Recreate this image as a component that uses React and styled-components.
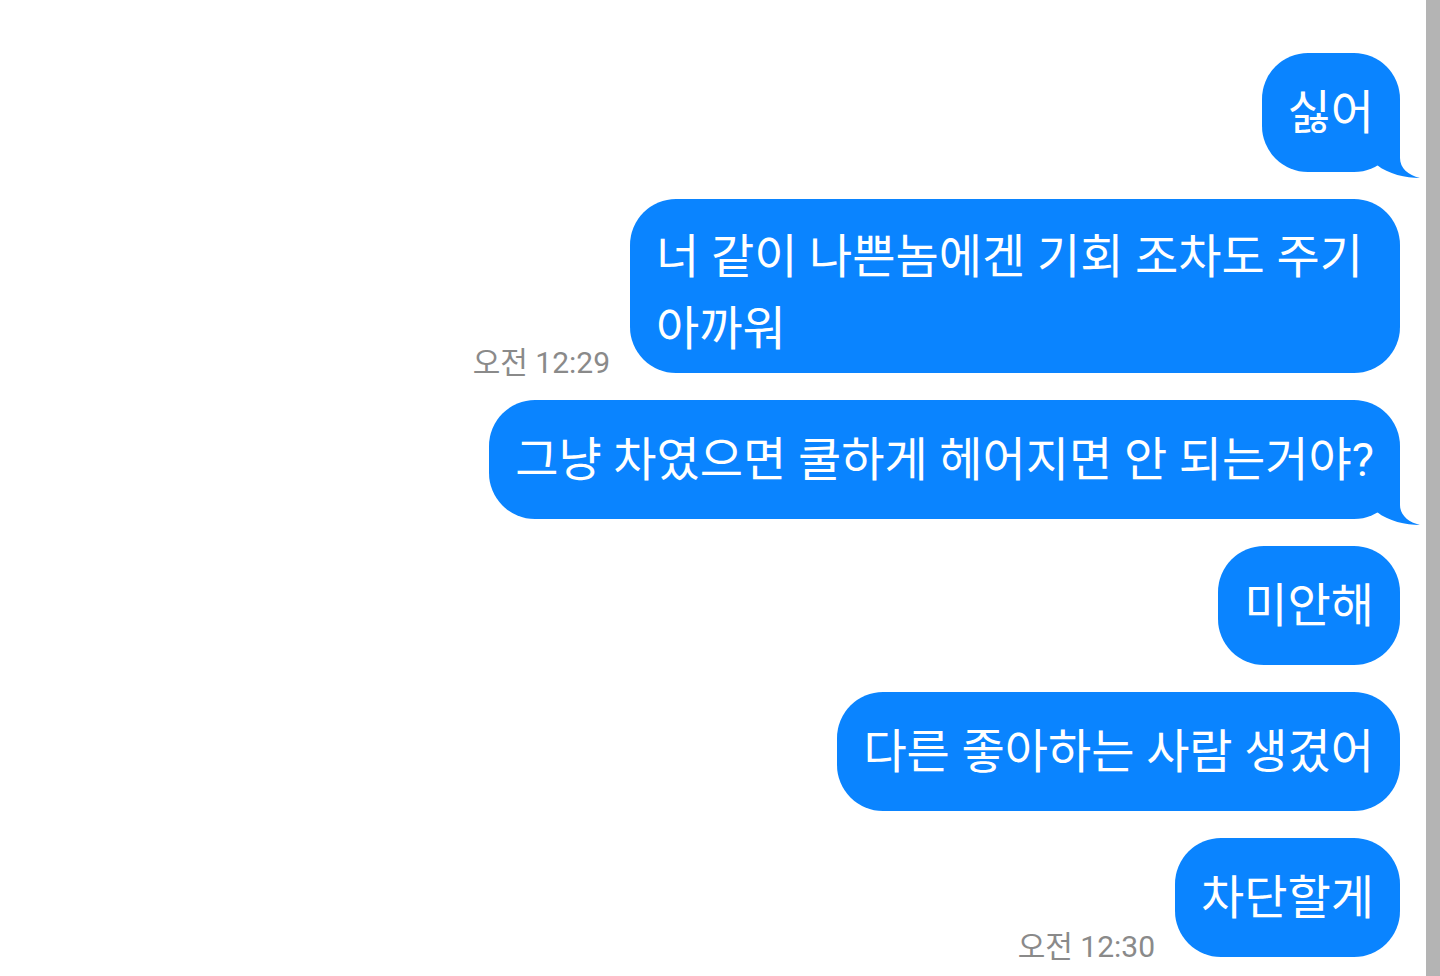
import React from "react";
import styled, { createGlobalStyle } from "styled-components";

const GlobalStyle = createGlobalStyle`
  html, body {
    margin: 0;
    padding: 0;
    background: #fff;
  }
  body {
    font-family: Roboto, "Noto Sans CJK KR", sans-serif;
  }
`;

const Screen = styled.div`
  display: flex;
  width: 1440px;
  height: 976px;
  overflow: hidden;
  background: #fff;
`;

const Thread = styled.div`
  flex: 1;
  display: flex;
  flex-direction: column;
  gap: 27px;
  padding: 53px 26px 0 0;
`;

const Scrollbar = styled.div`
  width: 14px;
  flex-shrink: 0;
  background: #b4b4b4;
`;

const Row = styled.div`
  display: flex;
  justify-content: flex-end;
  align-items: flex-end;
  gap: 20px;
`;

const Time = styled.span`
  font-size: 30px;
  line-height: 30px;
  color: #8a8a8a;
  margin-bottom: -5px;
  white-space: nowrap;
`;

const Bubble = styled.div`
  position: relative;
  box-sizing: border-box;
  max-width: ${(p) => (p.$maxWidth ? `${p.$maxWidth}px` : "none")};
  padding: ${(p) => (p.$multi ? "22px 26px 8px" : "29.5px 26px")};
  border-radius: 46px;
  background: #0a84ff;
  color: #fff;
  font-size: 47px;
  line-height: ${(p) => (p.$multi ? "72px" : "60px")};
  white-space: ${(p) => (p.$multi ? "normal" : "nowrap")};
  word-break: keep-all;
`;

const TailSvg = styled.svg`
  position: absolute;
  right: -22px;
  bottom: -8px;
  width: 52px;
  height: 60px;
`;

const Tail = () => (
  <TailSvg viewBox="0 0 52 60">
    <path
      d="M0 0 H30 V38 C30 48 38 55 50 58 C36 58 18 54 7 45 L0 45 Z"
      fill="#0a84ff"
    />
  </TailSvg>
);

const messages = [
  { text: "싫어", tail: true },
  {
    text: "너 같이 나쁜놈에겐 기회 조차도 주기 아까워",
    time: "오전 12:29",
    multi: true,
    maxWidth: 770,
  },
  { text: "그냥 차였으면 쿨하게 헤어지면 안 되는거야?", tail: true },
  { text: "미안해" },
  { text: "다른 좋아하는 사람 생겼어" },
  { text: "차단할게", time: "오전 12:30" },
];

const App = () => {
  return (
    <>
      <GlobalStyle />
      <Screen>
        <Thread>
          {messages.map((m, i) => (
            <Row key={i}>
              {m.time && <Time>{m.time}</Time>}
              <Bubble $multi={m.multi} $maxWidth={m.maxWidth}>
                {m.text}
                {m.tail && <Tail />}
              </Bubble>
            </Row>
          ))}
        </Thread>
        <Scrollbar />
      </Screen>
    </>
  );
};

export default App;
